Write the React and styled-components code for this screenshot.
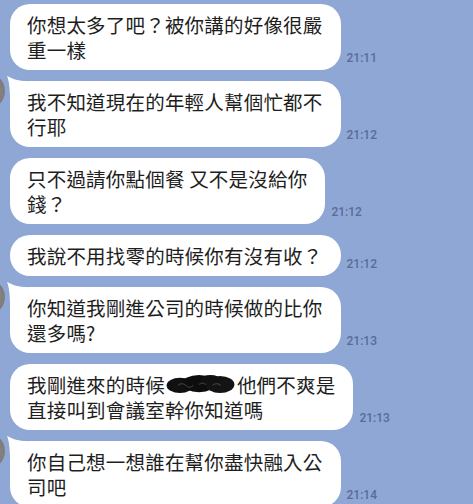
import React from "react";
import styled, { createGlobalStyle } from "styled-components";

const messages = [
  { lines: ["你想太多了吧？被你講的好像很嚴", "重一樣"], time: "21:11" },
  { lines: ["我不知道現在的年輕人幫個忙都不", "行耶"], time: "21:12", first: true },
  { lines: ["只不過請你點個餐 又不是沒給你", "錢？"], time: "21:12" },
  { lines: ["我說不用找零的時候你有沒有收？"], time: "21:12" },
  { lines: ["你知道我剛進公司的時候做的比你", "還多嗎?"], time: "21:13", first: true },
  { lines: [["我剛進來的時候", "BLOB", "他們不爽是"], "直接叫到會議室幹你知道嗎"], time: "21:13" },
  { lines: ["你自己想一想誰在幫你盡快融入公", "司吧"], time: "21:14", first: true },
];

const GlobalStyle = createGlobalStyle`
  html, body {
    margin: 0;
    padding: 0;
    background: #8ea7d4;
    overflow: hidden;
  }
`;

function Redacted() {
  return (
    <Blot viewBox="0 0 72 22" width="70" height="21">
      <ellipse cx="14" cy="12" rx="14" ry="8" fill="#111" />
      <ellipse cx="34" cy="10" rx="18" ry="9" fill="#0d0d0d" />
      <ellipse cx="56" cy="11" rx="15" ry="9" fill="#141414" />
      <ellipse cx="46" cy="6" rx="10" ry="5" fill="#111" />
      <path d="M12 12 q4 -4 8 0 t8 0 M34 11 q3 -3 7 0 M48 12 q4 -4 9 0" stroke="#3a3a3a" strokeWidth="1.2" fill="none" />
    </Blot>
  );
}

function Tail() {
  return (
    <TailSvg viewBox="0 0 24 26" width="24" height="26">
      <path d="M4 26 C4 14 3 5 1 1 C7 4 12 6 22 6 L22 26 Z" fill="#fff" />
    </TailSvg>
  );
}

function renderLine(line, i) {
  if (Array.isArray(line)) {
    return (
      <Line key={i}>
        {line.map((part, j) => (part === "BLOB" ? <Redacted key={j} /> : <span key={j}>{part}</span>))}
      </Line>
    );
  }
  return <Line key={i}>{line}</Line>;
}

export default function App() {
  return (
    <>
      <GlobalStyle />
      <Chat>
        {messages.map((m, i) => (
          <Row key={i}>
            {m.first ? <Avatar /> : <Spacer />}
            <Bubble>
              {m.first && <Tail />}
              {m.lines.map(renderLine)}
            </Bubble>
            <Time>{m.time}</Time>
          </Row>
        ))}
      </Chat>
    </>
  );
}

const Chat = styled.div`
  display: flex;
  flex-direction: column;
  gap: 11px;
  padding-top: 4px;
  font-family: "Noto Sans CJK TC", "Noto Sans", sans-serif;
`;

const Row = styled.div`
  display: flex;
  align-items: flex-end;
`;

const Spacer = styled.div`
  width: 10px;
  flex-shrink: 0;
`;

const Avatar = styled.div`
  width: 36px;
  height: 36px;
  border-radius: 50%;
  flex-shrink: 0;
  margin-left: -31px;
  margin-right: 5px;
  margin-top: -8px;
  align-self: flex-start;
  background: radial-gradient(circle at 70% 50%, #8a8684, #6d6a6c);
`;

const Bubble = styled.div`
  position: relative;
  background: #fff;
  border-radius: 20px;
  padding: 8px 18px 8px 17px;
  color: #1e1e1e;
  font-size: 19.5px;
  letter-spacing: 0.2px;
  line-height: 25px;
  white-space: nowrap;
`;

const Line = styled.div`
  display: flex;
  align-items: center;
  height: 25px;
`;

const Blot = styled.svg`
  display: block;
  margin: 0 1px 0 1px;
`;

const TailSvg = styled.svg`
  position: absolute;
  left: -4px;
  top: -6px;
`;

const Time = styled.div`
  margin-left: 6px;
  margin-bottom: 5px;
  font-family: Roboto, "Liberation Sans", sans-serif;
  font-size: 12px;
  line-height: 14px;
  font-weight: 500;
  color: #5a6b97;
`;
